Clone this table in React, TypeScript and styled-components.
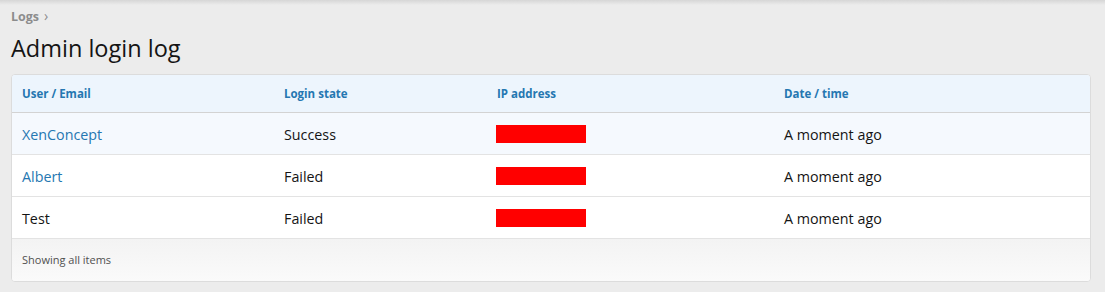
import React from "react";
import styled, { createGlobalStyle } from "styled-components";

const GlobalStyle = createGlobalStyle`
  html, body {
    margin: 0;
    padding: 0;
  }

  body {
    background: #ececec;
    font-family: "Open Sans", "Noto Sans", sans-serif;
    color: #141414;
  }
`;

interface LogEntry {
  user: string;
  isLink: boolean;
  state: string;
  date: string;
}

const entries: LogEntry[] = [
  { user: "XenConcept", isLink: true, state: "Success", date: "A moment ago" },
  { user: "Albert", isLink: true, state: "Failed", date: "A moment ago" },
  { user: "Test", isLink: false, state: "Failed", date: "A moment ago" },
];

const COLUMNS = "262px 213px 287px 1fr";

const AdminLoginLog: React.FC = () => {
  return (
    <>
      <GlobalStyle />
      <Page>
        <Breadcrumb>
          <CrumbLink>Logs</CrumbLink>
          <Chevron>›</Chevron>
        </Breadcrumb>
        <Title>Admin login log</Title>

        <Block>
          <HeaderRow>
            <HeaderCell>User / Email</HeaderCell>
            <HeaderCell>Login state</HeaderCell>
            <HeaderCell>IP address</HeaderCell>
            <HeaderCell>Date / time</HeaderCell>
          </HeaderRow>

          {entries.map((entry, i) => (
            <Row key={entry.user} highlight={i === 0}>
              <Cell>
                {entry.isLink ? <UserLink>{entry.user}</UserLink> : entry.user}
              </Cell>
              <Cell>{entry.state}</Cell>
              <Cell>
                <Redacted />
              </Cell>
              <Cell>{entry.date}</Cell>
            </Row>
          ))}

          <Footer>Showing all items</Footer>
        </Block>
      </Page>
    </>
  );
};

const Page = styled.div`
  min-height: 292px;
  box-sizing: border-box;
  padding: 6px 14px 10px 11px;
  background: linear-gradient(to bottom, #d6d6d6 0px, #ececec 5px);
`;

const Breadcrumb = styled.div`
  display: flex;
  align-items: center;
  gap: 5px;
  height: 20px;
  font-size: 12.5px;
  font-weight: 700;
  color: #8c8c8c;
`;

const CrumbLink = styled.span`
  color: #8c8c8c;
`;

const Chevron = styled.span`
  font-size: 14px;
  font-weight: 400;
  margin-top: -2px;
`;

const Title = styled.h1`
  margin: 7px 0 11px;
  font-size: 23.5px;
  font-weight: 400;
  line-height: 30px;
  color: #141414;
`;

const Block = styled.div`
  border: 1px solid #dcdcdc;
  border-radius: 4px;
  overflow: hidden;
  background: #fff;
`;

const HeaderRow = styled.div`
  display: grid;
  grid-template-columns: ${COLUMNS};
  align-items: center;
  height: 37px;
  background: #edf5fd;
  border-bottom: 1px solid #d3d3d3;
`;

const HeaderCell = styled.div`
  padding-left: 10px;
  font-size: 11.5px;
  font-weight: 700;
  color: #2577b1;
`;

const Row = styled.div<{ highlight: boolean }>`
  display: grid;
  grid-template-columns: ${COLUMNS};
  align-items: center;
  height: 41px;
  background: ${({ highlight }) => (highlight ? "#f5f9fe" : "#fff")};
  border-bottom: 1px solid #e3e3e3;
`;

const Cell = styled.div`
  padding-left: 10px;
  padding-top: 1px;
  font-size: 14.3px;
  color: #141414;
`;

const UserLink = styled.a`
  color: #2577b1;
  text-decoration: none;
  cursor: pointer;
`;

const Redacted = styled.div`
  width: 90px;
  height: 18px;
  margin-left: -1px;
  background: #ff0000;
`;

const Footer = styled.div`
  display: flex;
  align-items: center;
  height: 41px;
  padding-left: 10px;
  padding-bottom: 1px;
  font-size: 11px;
  color: #505050;
  background: linear-gradient(to bottom, #f3f3f3, #fafafa);
`;

export default AdminLoginLog;
